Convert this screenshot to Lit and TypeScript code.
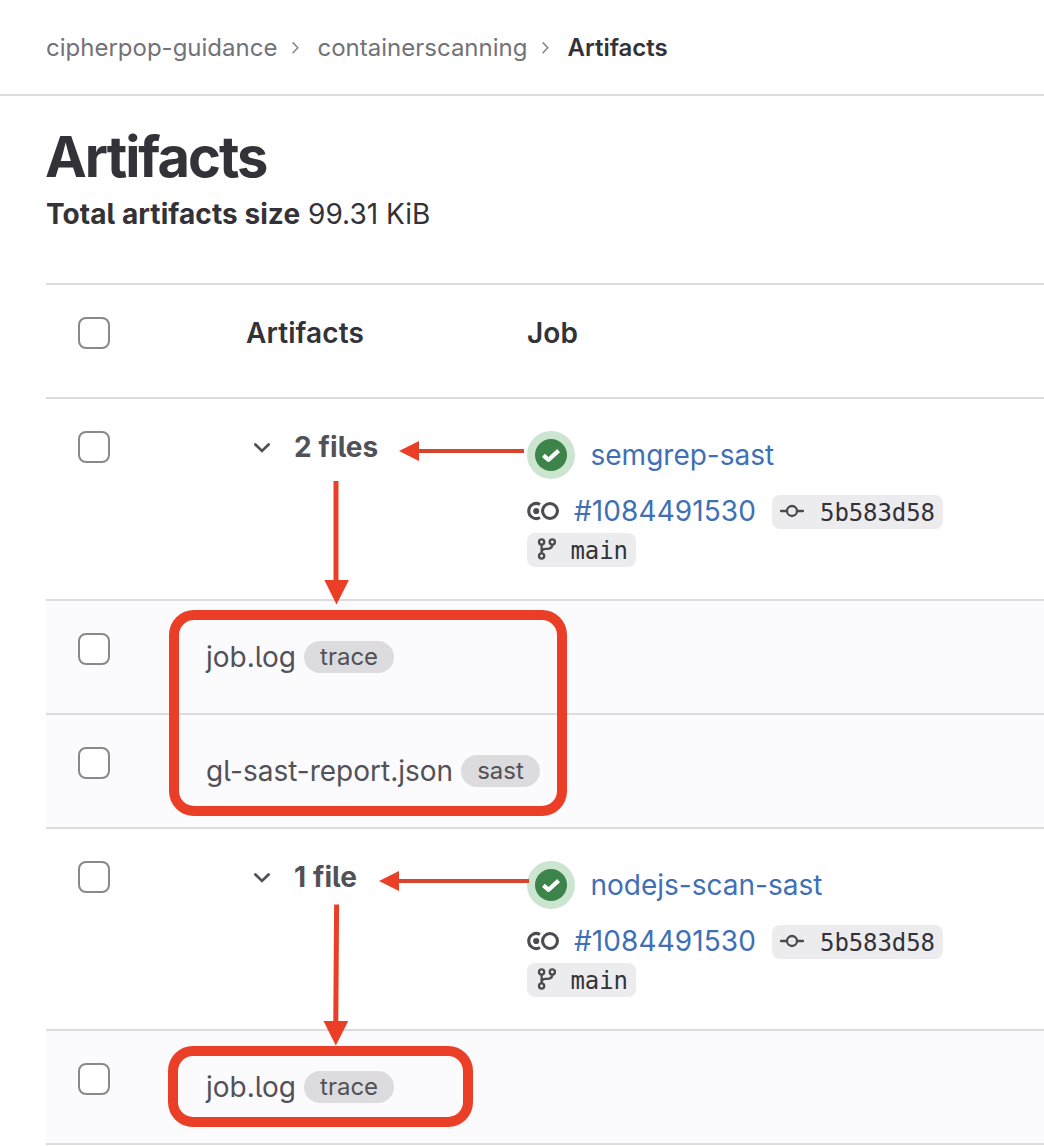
import { LitElement, html, css, svg, nothing } from "lit";
import { customElement, property } from "lit/decorators.js";

interface ArtifactFile {
  name: string;
  type: string;
}

interface Job {
  name: string;
  pipeline: string;
  commit: string;
  branch: string;
  files: ArtifactFile[];
}

const jobs: Job[] = [
  {
    name: "semgrep-sast",
    pipeline: "#1084491530",
    commit: "5b583d58",
    branch: "main",
    files: [
      { name: "job.log", type: "trace" },
      { name: "gl-sast-report.json", type: "sast" },
    ],
  },
  {
    name: "nodejs-scan-sast",
    pipeline: "#1084491530",
    commit: "5b583d58",
    branch: "main",
    files: [{ name: "job.log", type: "trace" }],
  },
];

@customElement("artifact-checkbox")
class ArtifactCheckbox extends LitElement {
  static styles = css`
    :host {
      display: block;
      box-sizing: border-box;
      width: 32px;
      height: 32px;
      border: 2px solid #89888d;
      border-radius: 8px;
      background: #fff;
    }
  `;
  render() {
    return nothing;
  }
}

@customElement("job-details")
class JobDetails extends LitElement {
  @property({ attribute: false }) job!: Job;

  static styles = css`
    :host {
      display: block;
    }
    svg {
      display: block;
      flex: none;
    }
    .title {
      display: flex;
      align-items: center;
      gap: 15.5px;
      height: 48px;
    }
    .link {
      color: #3f70b5;
      white-space: nowrap;
    }
    .refs {
      display: flex;
      flex-wrap: wrap;
      align-items: flex-start;
      gap: 4px 16px;
      width: 440px;
      margin-top: 16px;
    }
    .pipeline {
      display: flex;
      align-items: flex-start;
      gap: 15px;
      height: 32px;
      line-height: 32px;
      letter-spacing: 0.09px;
    }
    .chip {
      display: flex;
      align-items: center;
      box-sizing: border-box;
      height: 34px;
      padding: 0 8px;
      border-radius: 8px;
      background: #ececef;
      color: #333238;
      font: 24px/32px "DejaVu Sans Mono", monospace;
      letter-spacing: -0.08px;
    }
    .chip span {
      padding-top: 2px;
    }
    .chip.commit {
      gap: 16px;
    }
    .chip.branch {
      gap: 11.5px;
    }
  `;

  render() {
    const { name, pipeline, commit, branch } = this.job;
    return html`
      <div class="title">
        <svg width="48" height="48" viewBox="0 0 48 48">
          <circle cx="24" cy="24" r="24" fill="#cbe5d1" />
          <circle cx="24" cy="24" r="16" fill="#3c8449" />
          <path d="M16.4 24.4l5.2 4.4L31.6 19.6" fill="none" stroke="#fff" stroke-width="4.2" stroke-linejoin="round" />
        </svg>
        <a class="link">${name}</a>
      </div>
      <div class="refs">
        <div class="pipeline">
          <svg width="32" height="32" viewBox="0 0 32 32" fill="none" stroke="#4c4b51" stroke-width="3.1">
            <path d="M13 9.5A7.5 7.5 0 1 0 13 22.5" />
            <circle cx="23" cy="16" r="7.45" />
            <circle cx="9.2" cy="16" r="3.1" fill="#4c4b51" stroke="none" />
          </svg>
          <a class="link">${pipeline}</a>
        </div>
        <div class="chip commit">
          <svg width="24" height="24" viewBox="0 0 24 24" fill="none" stroke="#4c4b51" stroke-width="2.3">
            <circle cx="12" cy="11" r="5" />
            <path d="M1 11h6M17 11h6" stroke-linecap="round" />
          </svg>
          <span>${commit}</span>
        </div>
        <div class="chip branch">
          <svg width="24" height="24" viewBox="0 0 24 24" fill="none" stroke="#4c4b51" stroke-width="2.3">
            <circle cx="6.6" cy="4" r="2.6" />
            <circle cx="17.3" cy="4" r="2.6" />
            <circle cx="6.6" cy="18" r="2.6" />
            <path d="M6.6 6.6v8.8M17.3 6.6c0 3.2-1.5 4.2-4.5 4.2h-2.4c-2.4 0-3.8 1.2-3.8 3.8" />
          </svg>
          <span>${branch}</span>
        </div>
      </div>
    `;
  }
}

@customElement("app-root")
class AppRoot extends LitElement {
  static styles = css`
    :host {
      display: block;
      position: relative;
      height: 1146px;
      overflow: hidden;
      background: #fff;
      color: #333238;
      font: 28px/32px Inter, "Liberation Sans", sans-serif;
      font-feature-settings: "cv05";
    }
    .crumbs {
      display: flex;
      align-items: center;
      box-sizing: border-box;
      height: 96px;
      padding: 2px 0 0 46px;
      border-bottom: 2px solid #dcdcde;
      font-size: 24px;
      color: #737278;
      font-feature-settings: normal;
    }
    .crumbs svg {
      margin: 0 8.1px 0 8px;
    }
    .current {
      font-weight: 600;
      color: #333238;
    }
    .heading {
      height: 187px;
      padding-left: 46px;
      box-sizing: border-box;
      padding-top: 29px;
    }
    h1 {
      margin: 0 0 0 -1px;
      font-size: 56px;
      line-height: 64px;
      font-weight: 650;
      letter-spacing: -2.02px;
    }
    .total {
      margin-top: 9px;
    }
    .total strong {
      font-weight: 700;
      letter-spacing: 0.07px;
    }
    .table {
      margin-left: 46px;
    }
    .row {
      display: grid;
      grid-template-columns: 200px 281px 1fr;
      box-sizing: border-box;
      height: 114px;
      padding-top: 32px;
      border-top: 2px solid #dcdcde;
    }
    .row > artifact-checkbox {
      margin-left: 32px;
    }
    .head {
      font-weight: 600;
      letter-spacing: 0.1px;
    }
    .job {
      height: 202px;
    }
    .file {
      grid-template-columns: 160px 1fr;
      background: #fbfafd;
      color: #535158;
    }
    .end {
      border-top: 2px solid #dcdcde;
    }
    .toggle {
      display: flex;
      align-items: center;
      gap: 16px;
      height: 32px;
      color: #535158;
      font-weight: 700;
      letter-spacing: 0.1px;
    }
    .filename {
      display: flex;
      align-items: center;
      gap: 8px;
      height: 32px;
      margin-top: 8px;
    }
    .badge {
      box-sizing: border-box;
      height: 32px;
      padding: 0 16px;
      border-radius: 16px;
      background: #dcdcde;
      font-size: 24px;
      line-height: 32px;
    }
    .marks {
      position: absolute;
      left: 0;
      top: 0;
      pointer-events: none;
    }
  `;

  private separator() {
    return html`<svg width="24" height="24" viewBox="0 0 24 24" fill="none" stroke="#89888d" stroke-width="1.6">
      <path d="M7.6 6.4l5.2 5.4-5.2 5.4" />
    </svg>`;
  }

  private jobRows(job: Job) {
    const n = job.files.length;
    return html`
      <div class="row job">
        <artifact-checkbox></artifact-checkbox>
        <div class="toggle">
          <svg width="32" height="32" viewBox="0 0 32 32" fill="none" stroke="#535158" stroke-width="2.8" stroke-linecap="round">
            <path d="M9.4 13.4L16 19.9l6.6-6.5" />
          </svg>
          <span>${n} ${n === 1 ? "file" : "files"}</span>
        </div>
        <job-details .job=${job}></job-details>
      </div>
      ${job.files.map(
        (file) => html`<div class="row file">
          <artifact-checkbox></artifact-checkbox>
          <div class="filename"><span>${file.name}</span><span class="badge">${file.type}</span></div>
        </div>`
      )}
    `;
  }

  private arrow(line: string, head: string, width: number, color: string) {
    return svg`<path d=${line} stroke=${color} stroke-width=${width} fill="none" /><path d=${head} fill="#ea3f26" />`;
  }

  render() {
    return html`
      <nav class="crumbs">
        <span>cipherpop-guidance</span>${this.separator()}<span>containerscanning</span>${this.separator()}<span
          class="current"
          >Artifacts</span
        >
      </nav>
      <header class="heading">
        <h1>Artifacts</h1>
        <div class="total"><strong>Total artifacts size</strong> 99.31 KiB</div>
      </header>
      <main class="table">
        <div class="row head">
          <artifact-checkbox></artifact-checkbox>
          <span>Artifacts</span>
          <span>Job</span>
        </div>
        ${jobs.map((job) => this.jobRows(job))}
        <div class="end"></div>
      </main>
      <svg class="marks" width="1044" height="1146" viewBox="0 0 1044 1146">
        <rect x="174" y="615" width="388" height="196" rx="20" fill="none" stroke="#ea3f26" stroke-width="10" />
        <rect x="173" y="1051" width="295" height="71" rx="20" fill="none" stroke="#ea3f26" stroke-width="10" />
        ${this.arrow("M524 451H418", "M399 451l20-10v20z", 4, "#d7452d")}
        ${this.arrow("M529 881H398", "M379 881l20-10v20z", 4, "#d7452d")}
        ${this.arrow("M336 481V581", "M336.5 604.5l-12.2-24.5h24.6z", 5, "#ea3f26")}
        ${this.arrow("M336.6 904.5L335.8 1022", "M335.8 1045.5l-12.3-24.5h24.8z", 5, "#ea3f26")}
      </svg>
    `;
  }
}
